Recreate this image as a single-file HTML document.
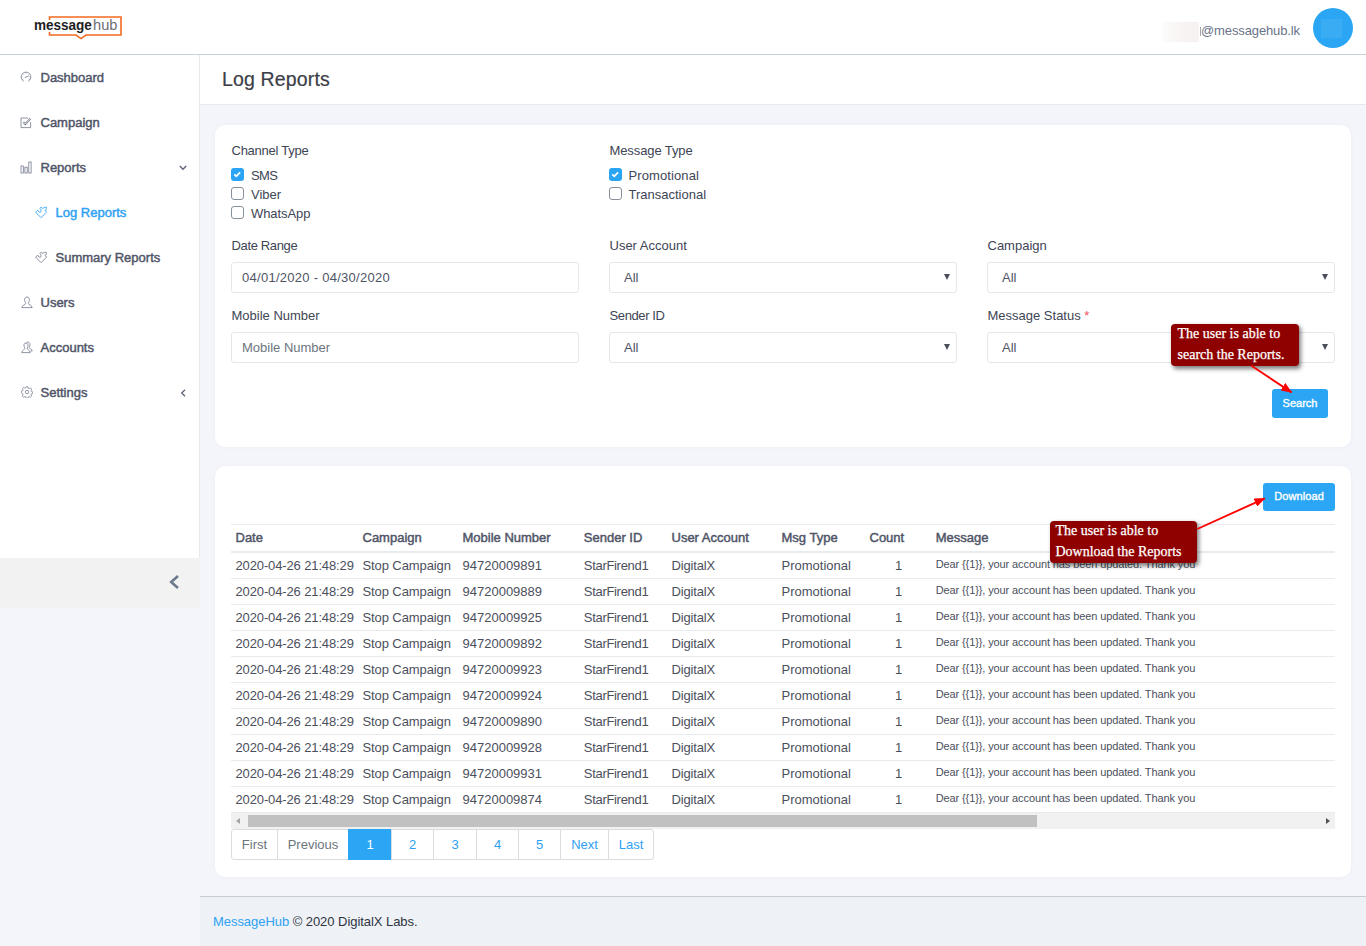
<!DOCTYPE html>
<html lang="en">
<head>
<meta charset="utf-8">
<title>Log Reports - MessageHub</title>
<style>
*{box-sizing:border-box;margin:0;padding:0}
html,body{width:1366px;height:946px;overflow:hidden}
body{position:relative;background:#f4f5fa;font-family:"Liberation Sans",Arial,sans-serif;font-size:13px;color:#3e4555;line-height:19.5px}
.abs{position:absolute}
/* header */
#hdr{position:absolute;left:0;top:0;width:1366px;height:55px;background:#fff;border-bottom:1px solid #c9d1d8}
#logo{position:absolute;left:0;top:0}
#email{position:absolute;left:1201px;top:21px;font-size:13px;color:#6a7388;white-space:nowrap;letter-spacing:-0.12px}
#blur{position:absolute;left:1162px;top:22px;width:37px;height:20px;background:linear-gradient(90deg,#fcfbfb,#f7f3f2 60%,#f6f2f1)}
#blur:after{content:"";position:absolute;left:37.5px;top:5px;width:1px;height:8.5px;background:#a2a7b4}
#avatar{position:absolute;left:1313px;top:8px;width:40px;height:40px;border-radius:50%;background:#2aa6f4}
#avatar i{position:absolute;left:8px;top:11px;width:21px;height:19px;background:rgba(255,255,255,.07)}
/* sidebar */
#side{position:absolute;left:0;top:55px;width:200px;height:503px;background:#fff;border-right:1px solid #e7e9ed}
#collapse{position:absolute;left:0;top:558px;width:200px;height:50px;background:#f2f2f2}
.mi{position:absolute;left:0;width:199px;height:45px;font-weight:normal;-webkit-text-stroke:0.45px currentColor;color:#4f5467;font-size:13px;white-space:nowrap}
.mi span{position:absolute;left:40.5px;top:12.5px}
.mi.sub span{left:55.5px}
.mi svg{position:absolute}
.mi.act{color:#2ea1f3}
/* title */
#title{position:absolute;left:200px;top:55px;width:1166px;height:50px;background:#fff;border-bottom:1px solid #e7e9ed}
#title h1{position:absolute;left:22px;top:10px;font-size:19.5px;line-height:28px;font-weight:normal;color:#3b3e47;white-space:nowrap;letter-spacing:0.15px;-webkit-text-stroke:0.2px currentColor}
.card{position:absolute;left:215px;width:1136px;background:#fff;border-radius:10px;box-shadow:0 0 4px rgba(0,0,0,.035)}
#footer{position:absolute;left:200px;top:896px;width:1166px;height:50px;background:#eef2f6;border-top:1px solid #c6cdd3}
#footer p{position:absolute;left:13px;top:15px;white-space:nowrap;color:#2f3441;letter-spacing:-0.05px}
#footer a{color:#2ea1f3;text-decoration:none}

/* form */
.lbl{position:absolute;white-space:nowrap;color:#3e4555;font-size:13px;line-height:19.5px}
.cb{position:absolute;width:13px;height:13px;border:1px solid #87909c;border-radius:3px;background:#fff}
.cb.on{border:none;background:#2aa4f4}
.cb.on svg{position:absolute;left:0;top:0}
.inp{position:absolute;width:348px;height:31px;border:1px solid #e4e7ec;border-radius:3px;background:#fff;font-size:13px;line-height:29px;padding-left:10px;color:#4f5467;white-space:nowrap}
.inp.sel{padding-left:14px}
.inp.ph{color:#6c757d}
.inp.sel:after{content:"";position:absolute;right:6.5px;top:11px;border-left:3.5px solid transparent;border-right:3.5px solid transparent;border-top:6px solid #4a4f59}
.btn{position:absolute;background:#2aa6f4;color:#fff;border-radius:3px;font-size:11px;text-align:center;-webkit-text-stroke:0.35px #fff;white-space:nowrap}

/* table */
#tbl{position:absolute;left:16px;top:58px;width:1104px;height:289px;border-top:1px solid #e9ecef}
.tr{position:absolute;left:0;width:1104px;height:26px;border-bottom:1px solid #e9eaed;line-height:25px;white-space:nowrap;color:#4b4f5c}
.th{position:absolute;left:0;top:0;width:1104px;height:28px;border-bottom:2px solid #e9ecef;line-height:25px;font-weight:normal;-webkit-text-stroke:0.45px currentColor;white-space:nowrap;color:#4f5467}
.tr b,.th b{position:absolute;top:0;font-weight:inherit}
.c1{left:4.5px}.c2{left:131.5px}.c3{left:231.5px}.c4{left:352.8px}.c5{left:440.5px}.c6{left:550.5px}.c7{left:638.5px}.c8{left:704.7px}
.tr .c7{left:634.5px;width:66px;text-align:center}
.tr .c8{font-size:11px;top:-1.5px;letter-spacing:-0.11px}
.tr .c1{letter-spacing:-0.13px}.tr .c2{letter-spacing:-0.1px}.tr .c4{letter-spacing:-0.31px}.tr .c5{letter-spacing:-0.16px}
#sb{position:absolute;left:16px;top:347px;width:1104px;height:16px;background:#f1f1f1}
#sb i{position:absolute;left:17px;top:2px;width:789px;height:12px;background:#c1c1c1}
#sb:before{content:"";position:absolute;left:5px;top:4.5px;border-top:3.5px solid transparent;border-bottom:3.5px solid transparent;border-right:4px solid #a3a3a3}
#sb:after{content:"";position:absolute;right:5px;top:4.5px;border-top:3.5px solid transparent;border-bottom:3.5px solid transparent;border-left:4px solid #505050}
#pg{position:absolute;left:16px;top:363px;height:31px;display:flex;border:1px solid #d9dde2;border-radius:3px;background:#fff}
#pg a{display:block;height:29px;line-height:29px;text-align:center;color:#2ea1f3;border-left:1px solid #d9dde2;font-size:13px;white-space:nowrap}
#pg a:first-child{border-left:none}
#pg a.dis{color:#6c757d}
#pg a.on{background:#2aa6f4;color:#fff;border-left-color:#2aa6f4;margin:-1px 0;height:31px;line-height:31px}

/* callouts */
.co{position:absolute;background:#8f0000;border-radius:4px;box-shadow:2px 2.5px 4px rgba(0,0,0,.5);color:#fff;font-family:"Liberation Serif","Times New Roman",serif;font-size:14px;line-height:21px;white-space:nowrap;-webkit-text-stroke:0.25px #fff}
.co p{position:absolute;left:6.5px;top:-1.5px}
#arrows{position:absolute;left:0;top:0;pointer-events:none}
</style>
</head>
<body>
<div id="hdr">
  <svg id="logo" width="140" height="54" viewBox="0 0 140 54">
    <path d="M49.5 17 H121 V35 H86 L81 38.6 L76 35 H49.5 Z" fill="none" stroke="#f26a21" stroke-width="1.6" stroke-linejoin="miter"/>
    <rect x="46" y="20" width="6" height="12" fill="#fff"/>
    <text x="33.9" y="29.6" font-family="'Liberation Sans',Arial,sans-serif" font-size="14" font-weight="bold" fill="#1d1d1f" textLength="58" lengthAdjust="spacingAndGlyphs">message</text>
    <text x="93" y="29.6" font-family="'Liberation Sans',Arial,sans-serif" font-size="14.5" fill="#6d6e71" textLength="24.4" lengthAdjust="spacingAndGlyphs">hub</text>
  </svg>
  <div id="blur"></div>
  <div id="email">@messagehub.lk</div>
  <div id="avatar"><i></i></div>
</div>

<div id="side">

  <div class="mi" style="top:0">
    <svg style="left:20px;top:16.3px" width="12" height="12" viewBox="0 0 12 12" fill="none" stroke="#6b7287" stroke-width="0.7" stroke-linecap="round"><path d="M3.6 10.27 A4.9 4.9 0 1 1 8.4 10.27"/><path d="M5.2 6.4 L8.3 5.1" stroke-width="0.8"/><path d="M6 1.5v.7M2.8 2.8l.5.5M9.2 2.8l-.5.5M1.5 6h.7M10.5 6h-.7M2.4 8.6l.5-.4M9.6 8.6l-.5-.4" stroke-width="0.5"/></svg>
    <span>Dashboard</span></div>
  <div class="mi" style="top:45px">
    <svg style="left:20px;top:17px" width="12" height="12" viewBox="0 0 12 12" fill="none" stroke="#6b7287" stroke-width="0.75"><path d="M10.6 5.2V10.6H1V1H8.2"/><path d="M3.3 5.1 L5.3 7.1 L10.4 1.7" stroke-width="1.9" stroke-linecap="butt"/><path d="M3.3 5.1 L5.3 7.1 L10.4 1.7" stroke="#fff" stroke-width="0.8"/></svg>
    <span>Campaign</span></div>
  <div class="mi" style="top:90px">
    <svg style="left:20px;top:16px" width="12" height="13" viewBox="0 0 12 13" fill="none" stroke="#6b7287" stroke-width="0.75"><rect x="1" y="5" width="2.3" height="7"/><rect x="4.9" y="6.2" width="2.3" height="5.8"/><rect x="8.8" y="1" width="2.3" height="11"/></svg>
    <span>Reports</span>
    <svg style="left:179px;top:20px" width="8" height="6" viewBox="0 0 8 6" fill="none" stroke="#5d6479" stroke-width="1.3"><path d="M0.8 1 L4 4.3 L7.2 1"/></svg></div>
  <div class="mi sub act" style="top:135px">
    <svg style="left:34.7px;top:16px" width="13" height="13" viewBox="0 0 13 13" fill="none" stroke="#2ea1f3" stroke-width="0.85" stroke-linejoin="round"><path d="M0.6 6.15 L2.85 4.15 Q3.4 6.2 5 6.35 Q6.3 6.2 6 4.4 Q5.9 2.9 4.9 2.3 L6 1.2 L7.9 2.55 L9.2 1.3 L11.3 1.3 L11.3 3.4 L9.8 4.45 L11.3 5.5 L11.3 6.4 L6 11.65 Z"/></svg>
    <span>Log Reports</span></div>
  <div class="mi sub" style="top:180px">
    <svg style="left:34.7px;top:16px" width="13" height="13" viewBox="0 0 13 13" fill="none" stroke="#6b7287" stroke-width="0.75" stroke-linejoin="round"><path d="M0.6 6.15 L2.85 4.15 Q3.4 6.2 5 6.35 Q6.3 6.2 6 4.4 Q5.9 2.9 4.9 2.3 L6 1.2 L7.9 2.55 L9.2 1.3 L11.3 1.3 L11.3 3.4 L9.8 4.45 L11.3 5.5 L11.3 6.4 L6 11.65 Z"/></svg>
    <span>Summary Reports</span></div>
  <div class="mi" style="top:225px">
    <svg style="left:21px;top:16px" width="12" height="13" viewBox="0 0 12 13" fill="none" stroke="#6b7287" stroke-width="0.75" stroke-linejoin="round"><path d="M6 1 C3.9 1 3.4 2.8 3.6 4.4 C3.8 6 4.6 6.8 4.6 7.6 C4.6 8.8 1.4 8.8 0.8 11.6 H11.2 C10.6 8.8 7.4 8.8 7.4 7.6 C7.4 6.8 8.2 6 8.4 4.4 C8.6 2.8 8.1 1 6 1 Z"/></svg>
    <span>Users</span></div>
  <div class="mi" style="top:270px">
    <svg style="left:21px;top:16px" width="12" height="13" viewBox="0 0 12 13" fill="none" stroke="#6b7287" stroke-width="0.75" stroke-linejoin="round"><path d="M5 2 C3.2 2 2.8 3.5 3 4.9 C3.2 6.2 3.8 6.9 3.8 7.6 C3.8 8.7 1.2 8.8 0.7 11.6 H9.3 C8.8 8.8 6.2 8.7 6.2 7.6 C6.2 6.9 6.8 6.2 7 4.9 C7.2 3.5 6.8 2 5 2 Z"/><path d="M5.6 1.4 C6.2 0.8 8.9 0.6 9 3.6 C9 5.2 8.2 5.8 8.2 6.6 C8.2 7.6 10.8 7.8 11.3 10 H9.6"/></svg>
    <span>Accounts</span></div>
  <div class="mi" style="top:315px">
    <svg style="left:21px;top:16px" width="12" height="12" viewBox="0 0 12 12" fill="none" stroke="#6b7287" stroke-width="0.7" stroke-linejoin="round"><circle cx="6" cy="6" r="1.7"/><path d="M5.1 0.8h1.8l.3 1.4 1 .5 1.3-.8 1.2 1.3-.8 1.2.4 1 1.4.4v1.7l-1.4.3-.4 1 .8 1.3-1.3 1.2-1.2-.8-1 .4-.3 1.4H5.1l-.3-1.4-1-.4-1.3.8-1.2-1.3.8-1.2-.4-1L.3 6.9V5.1l1.4-.3.4-1-.8-1.3 1.3-1.2 1.2.8 1-.4z"/></svg>
    <span>Settings</span>
    <svg style="left:180px;top:19px" width="6" height="8" viewBox="0 0 6 8" fill="none" stroke="#5d6479" stroke-width="1.3"><path d="M5 0.8 L1.7 4 L5 7.2"/></svg></div>
</div>
<div id="collapse">
  <svg class="abs" style="left:168px;top:16px" width="13" height="16" viewBox="0 0 13 16"><path d="M10 2 L3.2 8 L10 14" fill="none" stroke="#6b7a8d" stroke-width="2.6" stroke-linecap="butt" stroke-linejoin="miter"/></svg>
</div>

<div id="title"><h1>Log Reports</h1></div>

<div class="card" id="card1" style="top:125px;height:322px">

  <div class="lbl" style="left:16.5px;top:16px;letter-spacing:-0.26px">Channel Type</div>
  <div class="cb on" style="left:16px;top:43px"><svg width="13" height="13" viewBox="0 0 13 13"><path d="M3.3 6.3 L5.3 8.3 L9.1 4.4" fill="none" stroke="#fff" stroke-width="1.8"/></svg></div>
  <div class="lbl" style="left:36px;top:41px;letter-spacing:-0.6px">SMS</div>
  <div class="cb" style="left:16px;top:62px"></div>
  <div class="lbl" style="left:36px;top:60px">Viber</div>
  <div class="cb" style="left:16px;top:81px"></div>
  <div class="lbl" style="left:36px;top:79px;letter-spacing:-0.08px">WhatsApp</div>

  <div class="lbl" style="left:394.5px;top:16px;letter-spacing:-0.1px">Message Type</div>
  <div class="cb on" style="left:394px;top:43px"><svg width="13" height="13" viewBox="0 0 13 13"><path d="M3.3 6.3 L5.3 8.3 L9.1 4.4" fill="none" stroke="#fff" stroke-width="1.8"/></svg></div>
  <div class="lbl" style="left:413.5px;top:41px;letter-spacing:0.1px">Promotional</div>
  <div class="cb" style="left:394px;top:62px"></div>
  <div class="lbl" style="left:413.5px;top:60px">Transactional</div>

  <div class="lbl" style="left:16.5px;top:110.5px;letter-spacing:-0.36px">Date Range</div>
  <div class="inp" style="left:16px;top:137px;letter-spacing:0.27px">04/01/2020 - 04/30/2020</div>
  <div class="lbl" style="left:394.5px;top:110.5px">User Account</div>
  <div class="inp sel" style="left:394px;top:137px">All</div>
  <div class="lbl" style="left:772.5px;top:110.5px">Campaign</div>
  <div class="inp sel" style="left:772px;top:137px">All</div>

  <div class="lbl" style="left:16.5px;top:180.5px">Mobile Number</div>
  <div class="inp ph" style="left:16px;top:207px">Mobile Number</div>
  <div class="lbl" style="left:394.5px;top:180.5px;letter-spacing:-0.38px">Sender ID</div>
  <div class="inp sel" style="left:394px;top:207px">All</div>
  <div class="lbl" style="left:772.5px;top:180.5px">Message Status <span style="color:#f0505f">*</span></div>
  <div class="inp sel" style="left:772px;top:207px">All</div>

  <div class="btn" style="left:1057px;top:264px;width:56px;height:29px;line-height:28px">Search</div>
</div>

<div class="card" id="card2" style="top:466px;height:411px">

  <div class="btn" style="left:1048px;top:17px;width:72px;height:28px;line-height:27px;letter-spacing:0.1px">Download</div>
  <div id="tbl">
    <div class="th"><b class="c1">Date</b><b class="c2">Campaign</b><b class="c3">Mobile Number</b><b class="c4">Sender ID</b><b class="c5">User Account</b><b class="c6">Msg Type</b><b class="c7">Count</b><b class="c8">Message</b></div>
    <div class="tr" style="top:28px"><b class="c1">2020-04-26 21:48:29</b><b class="c2">Stop Campaign</b><b class="c3">94720009891</b><b class="c4">StarFirend1</b><b class="c5">DigitalX</b><b class="c6">Promotional</b><b class="c7">1</b><b class="c8">Dear {{1}}, your account has been updated. Thank you</b></div>
    <div class="tr" style="top:54px"><b class="c1">2020-04-26 21:48:29</b><b class="c2">Stop Campaign</b><b class="c3">94720009889</b><b class="c4">StarFirend1</b><b class="c5">DigitalX</b><b class="c6">Promotional</b><b class="c7">1</b><b class="c8">Dear {{1}}, your account has been updated. Thank you</b></div>
    <div class="tr" style="top:80px"><b class="c1">2020-04-26 21:48:29</b><b class="c2">Stop Campaign</b><b class="c3">94720009925</b><b class="c4">StarFirend1</b><b class="c5">DigitalX</b><b class="c6">Promotional</b><b class="c7">1</b><b class="c8">Dear {{1}}, your account has been updated. Thank you</b></div>
    <div class="tr" style="top:106px"><b class="c1">2020-04-26 21:48:29</b><b class="c2">Stop Campaign</b><b class="c3">94720009892</b><b class="c4">StarFirend1</b><b class="c5">DigitalX</b><b class="c6">Promotional</b><b class="c7">1</b><b class="c8">Dear {{1}}, your account has been updated. Thank you</b></div>
    <div class="tr" style="top:132px"><b class="c1">2020-04-26 21:48:29</b><b class="c2">Stop Campaign</b><b class="c3">94720009923</b><b class="c4">StarFirend1</b><b class="c5">DigitalX</b><b class="c6">Promotional</b><b class="c7">1</b><b class="c8">Dear {{1}}, your account has been updated. Thank you</b></div>
    <div class="tr" style="top:158px"><b class="c1">2020-04-26 21:48:29</b><b class="c2">Stop Campaign</b><b class="c3">94720009924</b><b class="c4">StarFirend1</b><b class="c5">DigitalX</b><b class="c6">Promotional</b><b class="c7">1</b><b class="c8">Dear {{1}}, your account has been updated. Thank you</b></div>
    <div class="tr" style="top:184px"><b class="c1">2020-04-26 21:48:29</b><b class="c2">Stop Campaign</b><b class="c3">94720009890</b><b class="c4">StarFirend1</b><b class="c5">DigitalX</b><b class="c6">Promotional</b><b class="c7">1</b><b class="c8">Dear {{1}}, your account has been updated. Thank you</b></div>
    <div class="tr" style="top:210px"><b class="c1">2020-04-26 21:48:29</b><b class="c2">Stop Campaign</b><b class="c3">94720009928</b><b class="c4">StarFirend1</b><b class="c5">DigitalX</b><b class="c6">Promotional</b><b class="c7">1</b><b class="c8">Dear {{1}}, your account has been updated. Thank you</b></div>
    <div class="tr" style="top:236px"><b class="c1">2020-04-26 21:48:29</b><b class="c2">Stop Campaign</b><b class="c3">94720009931</b><b class="c4">StarFirend1</b><b class="c5">DigitalX</b><b class="c6">Promotional</b><b class="c7">1</b><b class="c8">Dear {{1}}, your account has been updated. Thank you</b></div>
    <div class="tr" style="top:262px"><b class="c1">2020-04-26 21:48:29</b><b class="c2">Stop Campaign</b><b class="c3">94720009874</b><b class="c4">StarFirend1</b><b class="c5">DigitalX</b><b class="c6">Promotional</b><b class="c7">1</b><b class="c8">Dear {{1}}, your account has been updated. Thank you</b></div>
  </div>
  <div id="sb"><i></i></div>
  <div id="pg"><a class="dis" style="width:45px">First</a><a class="dis" style="width:71px">Previous</a><a class="on" style="width:43px">1</a><a style="width:42px">2</a><a style="width:43px">3</a><a style="width:42px">4</a><a style="width:42px">5</a><a style="width:48px">Next</a><a style="width:45px">Last</a></div>
</div>

<div id="footer"><p><a>MessageHub</a> © 2020 DigitalX Labs.</p></div>


<div class="co" style="left:1171px;top:324px;width:128px;height:42px"><p>The user is able to<br>search the Reports.</p></div>
<div class="co" style="left:1050px;top:521px;width:147px;height:42px"><p style="left:5.5px;top:-1px">The user is able to<br>Download the Reports</p></div>
<svg id="arrows" width="1366" height="946" viewBox="0 0 1366 946">
  <defs><marker id="ah" viewBox="0 0 10 8" refX="9.5" refY="4" markerWidth="11" markerHeight="8.8" markerUnits="userSpaceOnUse" orient="auto"><path d="M0 0 L10 4 L0 8 Z" fill="#ff0000"/></marker></defs>
  <line x1="1251.5" y1="365.8" x2="1291.6" y2="392.4" stroke="#ff0000" stroke-width="1.9" marker-end="url(#ah)"/>
  <line x1="1197.3" y1="529" x2="1264.9" y2="498.3" stroke="#ff0000" stroke-width="1.9" marker-end="url(#ah)"/>
</svg>
</body>
</html>
